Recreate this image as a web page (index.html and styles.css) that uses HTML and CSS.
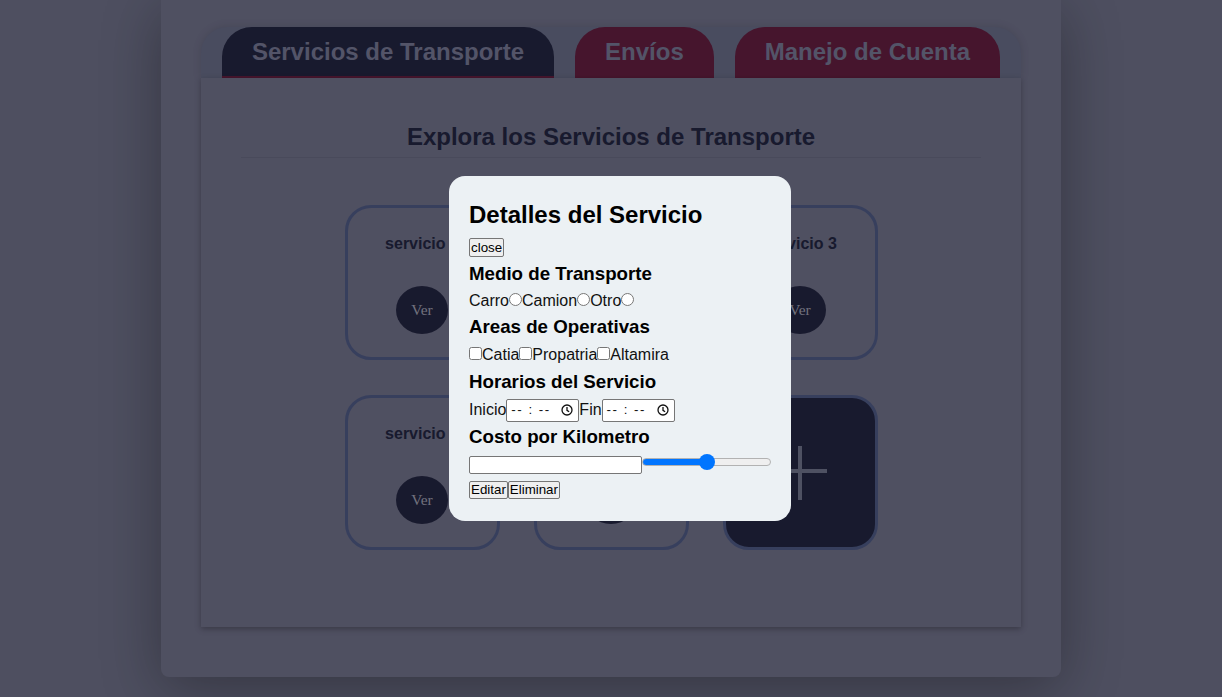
FILE: index.html
```html
<!DOCTYPE html>
<html lang="es">
<head>
<meta charset="utf-8">
<title>Servicios de Transporte</title>
<link rel="stylesheet" href="styles.css">
</head>
<body>
<div class="page">
  <nav class="tabbar">
    <div class="tab tab-active">Servicios de Transporte</div>
    <div class="tab">Envíos</div>
    <div class="tab">Manejo de Cuenta</div>
  </nav>
  <main class="panel">
    <h2 class="panel-title">Explora los Servicios de Transporte</h2>
    <div class="grid">
      <div class="card"><span class="card-name">servicio 1</span><button class="ver">Ver</button></div>
      <div class="card"><span class="card-name">servicio 2</span><button class="ver">Ver</button></div>
      <div class="card"><span class="card-name">servicio 3</span><button class="ver">Ver</button></div>
      <div class="card"><span class="card-name">servicio 4</span><button class="ver">Ver</button></div>
      <div class="card"><span class="card-name">servicio 5</span><button class="ver">Ver</button></div>
      <div class="card card-add">
        <svg class="plus" width="56" height="56" viewBox="0 0 56 56"><path d="M28 1v54M1 26h54" stroke="currentColor" stroke-width="4" fill="none"/></svg>
      </div>
    </div>
  </main>
</div>

<div class="overlay">
  <div class="modal">
    <h2 class="m-title">Detalles del Servicio</h2>
    <button class="btn m-close">close</button>
    <h3 class="m-h">Medio de Transporte</h3>
    <div class="m-row">Carro<input type="radio" name="medio">Camion<input type="radio" name="medio">Otro<input type="radio" name="medio"></div>
    <h3 class="m-h">Areas de Operativas</h3>
    <div class="m-row m-row-2"><input type="checkbox">Catia<input type="checkbox">Propatria<input type="checkbox">Altamira</div>
    <h3 class="m-h m-h-3">Horarios del Servicio</h3>
    <div class="m-row m-time-row">Inicio<span class="time"><span class="time-txt">-- : --</span><svg width="12" height="12" viewBox="0 0 12 12"><circle cx="6" cy="6" r="5" fill="none" stroke="#111" stroke-width="1.3"/><path d="M6 3v3.3l2.1 1.5" fill="none" stroke="#111" stroke-width="1.3"/></svg></span>Fin<span class="time"><span class="time-txt">-- : --</span><svg width="12" height="12" viewBox="0 0 12 12"><circle cx="6" cy="6" r="5" fill="none" stroke="#111" stroke-width="1.3"/><path d="M6 3v3.3l2.1 1.5" fill="none" stroke="#111" stroke-width="1.3"/></svg></span></div>
    <h3 class="m-h m-h-4">Costo por Kilometro</h3>
    <div class="m-row m-cost-row"><input class="txt" type="text"><input class="range" type="range" min="0" max="100" value="50"></div>
    <div class="m-actions"><button class="btn">Editar</button><button class="btn">Eliminar</button></div>
  </div>
</div>
</body>
</html>
```

FILE: styles.css
```css
* {
  margin: 0;
  padding: 0;
  box-sizing: border-box;
}

html, body {
  height: 100%;
}

body {
  background: #8284a0;
  font-family: "Liberation Sans", Arial, sans-serif;
  overflow: hidden;
}

.page {
  width: 900px;
  margin: 0 auto;
  background: #8485a2;
  border-radius: 0 0 8px 8px;
  padding: 27px 40px 50px;
  box-shadow: 0 12px 60px rgba(0, 0, 0, 0.32);
}

.tabbar {
  display: flex;
  justify-content: center;
  gap: 21px;
  padding: 0 21px;
  background: #7a7f9e;
  border-radius: 26px 26px 0 0;
  box-shadow: 0 0 10px rgba(0, 0, 0, 0.12);
}

.tab {
  padding: 11px 30px 10px;
  font-size: 24px;
  font-weight: bold;
  line-height: 28px;
  color: #8a8dae;
  background: #76244c;
  border-radius: 30px 30px 0 0;
  border-bottom: 2px solid #76244c;
  white-space: nowrap;
}

.tab-active {
  background: #292c4d;
}

.panel {
  background: #8485a2;
  padding: 45px 40px 77px;
  box-shadow: 0 2px 6px rgba(0, 0, 0, 0.28);
  position: relative;
}

.panel-title {
  font-size: 24px;
  line-height: 28px;
  text-align: center;
  color: #292c4d;
  padding-bottom: 6px;
  border-bottom: 1px solid #7a7c98;
}

.grid {
  display: grid;
  grid-template-columns: repeat(3, 155px);
  grid-auto-rows: 155px;
  column-gap: 34px;
  row-gap: 35px;
  justify-content: center;
  margin-top: 47px;
}

.card {
  border: 3px solid #5c6a9c;
  border-radius: 26px;
  display: flex;
  flex-direction: column;
  align-items: center;
  padding-top: 27px;
  gap: 33px;
}

.card-name {
  font-size: 16px;
  line-height: 18px;
  font-weight: bold;
  color: #292c4d;
}

.ver {
  width: 52px;
  height: 48px;
  border: none;
  border-radius: 50%;
  background: #292c4d;
  color: #bcbcd0;
  font-family: "Liberation Serif", "Times New Roman", serif;
  font-size: 15.5px;
}

.card-add {
  background: #292c4d;
  justify-content: center;
  padding-top: 0;
  color: #8287a3;
}

.plus {
  display: block;
}

/* modal */
.overlay {
  position: fixed;
  inset: 0;
  background: rgba(0, 0, 0, 0.4);
  display: flex;
  align-items: center;
  justify-content: center;
  padding-left: 18px;
}

.modal {
  width: 342px;
  background: #ecf1f4;
  border-radius: 16px;
  padding: 20px 20px 22px;
  color: #000;
  display: flex;
  flex-direction: column;
  align-items: flex-start;
}

.m-title {
  font-size: 24px;
  line-height: 28px;
  margin-top: 5px;
}

.btn {
  font-family: "Liberation Sans", Arial, sans-serif;
  font-size: 13.33px;
  line-height: 15px;
  height: 18.5px;
  padding: 0 1px;
  background: #efefef;
  border: 1px solid #767676;
  border-radius: 2px;
  color: #000;
}

.m-close {
  margin-top: 9.5px;
}

.m-h {
  font-size: 18.72px;
  line-height: 22px;
  margin-top: 6.5px;
}

.m-row {
  font-size: 16px;
  line-height: 18px;
  margin-top: 6.5px;
  color: #111;
  white-space: nowrap;
}

.m-row-2 {
  margin-top: 7.5px;
}

.m-h-3 {
  margin-top: 7.3px;
}

.m-row input[type="radio"],
.m-row input[type="checkbox"] {
  margin: 0;
  width: 13px;
  height: 13px;
}

.m-time-row {
  display: flex;
  align-items: center;
  margin-top: 5.5px;
}

.time {
  width: 73px;
  height: 23.5px;
  background: #fff;
  border: 1px solid #767676;
  border-radius: 2px;
  display: flex;
  align-items: center;
  justify-content: space-between;
  padding: 0 5px 0 4px;
  font-size: 13.33px;
}

.time-txt {
  letter-spacing: 1.5px;
  color: #111;
}

.m-h-4 {
  margin-top: 4.2px;
}

.m-cost-row {
  display: flex;
  align-items: flex-start;
  margin-top: 7.2px;
}

.txt {
  width: 173px;
  height: 18.3px;
  border: 1px solid #767676;
  border-radius: 2px;
  background: #fff;
}

.range {
  -webkit-appearance: none;
  appearance: none;
  width: 129px;
  height: 16px;
  margin: -1.5px 0 0 0;
  background: transparent;
}

.range::-webkit-slider-runnable-track {
  height: 8px;
  border-radius: 4px;
  background: linear-gradient(to right, #0075ff 50%, #efefef 50%);
  border: 1px solid #b2b2b2;
}

.range::-webkit-slider-thumb {
  -webkit-appearance: none;
  appearance: none;
  width: 16px;
  height: 16px;
  border-radius: 50%;
  background: #0075ff;
  margin-top: -5px;
  border: none;
}

.m-actions {
  display: flex;
  margin-top: 6.7px;
}
```
